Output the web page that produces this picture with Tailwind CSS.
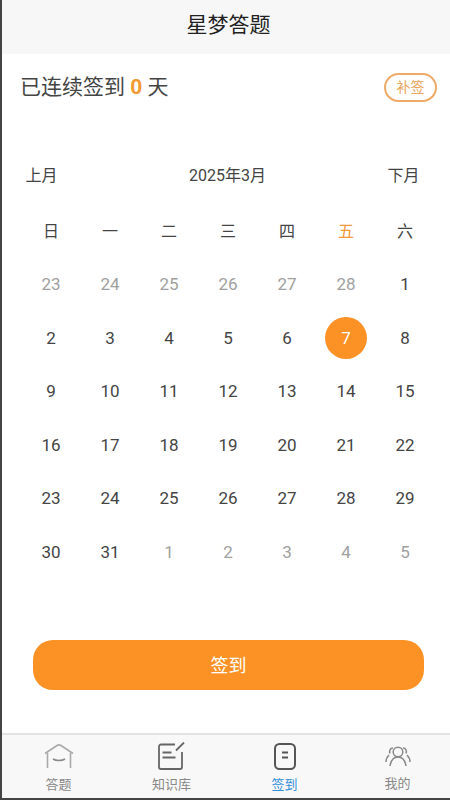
<!DOCTYPE html>
<html lang="zh-CN">

<head>
    <meta charset="UTF-8">
    <meta name="viewport" content="width=device-width, initial-scale=1.0">
    <title>星梦答题</title>
    <script src="https://cdn.jsdelivr.net/npm/@tailwindcss/browser@4"></script>
</head>

<body class="bg-white font-['Roboto','Noto_Sans_CJK_SC',sans-serif] text-[#444]">

    <div class="w-[450px] h-[800px] overflow-hidden flex flex-col border-l-2 border-b-2 border-[#444] bg-white">
        <!-- header -->
        <div class="h-[54px] shrink-0 bg-[#f7f7f7] flex items-center justify-center pl-[5px] pb-[3px] text-[21px] text-[#222]">星梦答题</div>

        <!-- streak -->
        <div class="h-[66px] shrink-0 flex items-center justify-between pl-[18px] pr-[13px]">
            <div class="pt-[2px] text-[21px] text-[#444]">已连续签到 <span class="font-bold text-[#f39a33]">0</span> 天</div>
            <div class="w-[53px] h-[29px] rounded-full border-2 border-[#eeaa66] flex items-center justify-center text-[14px] text-[#e9a45c]">补签</div>
        </div>

        <!-- calendar -->
        <div class="pl-[19.5px] pr-[13.5px] pt-[29px]">
            <div class="h-[54px] flex items-center justify-between pl-[4px] pr-[17px] text-[16px]">
                <span>上月</span>
                <span class="ml-[10px]">2025年3月</span>
                <span>下月</span>
            </div>
            <div class="grid grid-cols-7 w-[413px] mb-[-3px] text-center text-[16px]">
                <div class="h-[58px] flex items-center justify-center">日</div>
                <div class="h-[58px] flex items-center justify-center">一</div>
                <div class="h-[58px] flex items-center justify-center">二</div>
                <div class="h-[58px] flex items-center justify-center">三</div>
                <div class="h-[58px] flex items-center justify-center">四</div>
                <div class="h-[58px] flex items-center justify-center text-[#f29a3a]">五</div>
                <div class="h-[58px] flex items-center justify-center">六</div>
            </div>
            <div id="days" class="grid grid-cols-7 w-[413px] auto-rows-[53.6px] text-[17px]">
                <div class="flex items-center justify-center text-[#a0a0a0]">23</div>
                <div class="flex items-center justify-center text-[#a0a0a0]">24</div>
                <div class="flex items-center justify-center text-[#a0a0a0]">25</div>
                <div class="flex items-center justify-center text-[#a0a0a0]">26</div>
                <div class="flex items-center justify-center text-[#a0a0a0]">27</div>
                <div class="flex items-center justify-center text-[#a0a0a0]">28</div>
                <div class="flex items-center justify-center">1</div>
                <div class="flex items-center justify-center">2</div>
                <div class="flex items-center justify-center">3</div>
                <div class="flex items-center justify-center">4</div>
                <div class="flex items-center justify-center">5</div>
                <div class="flex items-center justify-center">6</div>
                <div class="flex items-center justify-center"><span class="w-[42px] h-[42px] rounded-full bg-[#fc9226] text-white flex items-center justify-center">7</span></div>
                <div class="flex items-center justify-center">8</div>
                <div class="flex items-center justify-center">9</div>
                <div class="flex items-center justify-center">10</div>
                <div class="flex items-center justify-center">11</div>
                <div class="flex items-center justify-center">12</div>
                <div class="flex items-center justify-center">13</div>
                <div class="flex items-center justify-center">14</div>
                <div class="flex items-center justify-center">15</div>
                <div class="flex items-center justify-center">16</div>
                <div class="flex items-center justify-center">17</div>
                <div class="flex items-center justify-center">18</div>
                <div class="flex items-center justify-center">19</div>
                <div class="flex items-center justify-center">20</div>
                <div class="flex items-center justify-center">21</div>
                <div class="flex items-center justify-center">22</div>
                <div class="flex items-center justify-center">23</div>
                <div class="flex items-center justify-center">24</div>
                <div class="flex items-center justify-center">25</div>
                <div class="flex items-center justify-center">26</div>
                <div class="flex items-center justify-center">27</div>
                <div class="flex items-center justify-center">28</div>
                <div class="flex items-center justify-center">29</div>
                <div class="flex items-center justify-center">30</div>
                <div class="flex items-center justify-center">31</div>
                <div class="flex items-center justify-center text-[#a0a0a0]">1</div>
                <div class="flex items-center justify-center text-[#a0a0a0]">2</div>
                <div class="flex items-center justify-center text-[#a0a0a0]">3</div>
                <div class="flex items-center justify-center text-[#a0a0a0]">4</div>
                <div class="flex items-center justify-center text-[#a0a0a0]">5</div>
            </div>
        </div>

        <!-- sign in button -->
        <div class="flex-1 flex items-start pl-[31px] pt-[60px]">
            <div class="w-[391px] h-[50px] rounded-[20px] bg-[#fc9226] text-white text-[18px] pt-[2px] flex items-center justify-center">签到</div>
        </div>

        <!-- tab bar -->
        <div class="h-[65px] shrink-0 border-t-2 border-[#e2e2e2] bg-[#f8f8f8] grid grid-cols-4 w-[452px] text-[13px] text-[#888]">
            <div class="flex flex-col items-center pt-[8px]">
                <svg class="w-[30px] h-[26px]" viewBox="0 0 30 26" fill="none" stroke="#aaa" stroke-width="1.6">
                    <path d="M1 10.500 13 2.500q2-1.200 4 0l12 8" />
                    <path d="M3.500 10v15M26.500 10v15" />
                    <path d="M9 16c3 2 9 2 12 0" stroke="#888" />
                </svg>
                <span class="mt-[6px]">答题</span>
            </div>
            <div class="flex flex-col items-center pt-[7px]">
                <svg class="w-[27px] h-[28px]" viewBox="0 0 27 28" fill="none" stroke="#666" stroke-width="1.800">
                    <path d="M17 2.500H3a2 2 0 0 0-2 2v20.500a2 2 0 0 0 2 2h19a2 2 0 0 0 2-2V10" />
                    <path d="M4.500 10.500h9M4.500 15.500h13" />
                    <path d="M18 8.500 26 .5" />
                </svg>
                <span class="mt-[5px]">知识库</span>
            </div>
            <div class="flex flex-col items-center pt-[8px]">
                <svg class="w-[22px] h-[27px]" viewBox="0 0 22 27" fill="none" stroke="#555" stroke-width="2">
                    <rect x="1" y="1" width="20" height="25" rx="4.500" />
                    <path d="M8 9.500h6M8 14.500h6" />
                </svg>
                <span class="mt-[5px] text-[#2e8fd8]">签到</span>
            </div>
            <div class="flex flex-col items-center pt-[11px]">
                <svg class="w-[26px] h-[22px]" viewBox="0 0 26 22" fill="none" stroke="#888" stroke-width="1.500">
                    <circle cx="13" cy="6" r="4.800" />
                    <path d="M5 20c1-6 4-9 8-9s7 3 8 9" />
                    <path d="M8 2C5 2 4 5 5 7.500M1 16c0-3 1-5 3-7M18 2c3 0 4 3 3 5.500M25 16c0-3-1-5-3-7" />
                </svg>
                <span class="mt-[6px]">我的</span>
            </div>
        </div>
    </div>

</body>

</html>
